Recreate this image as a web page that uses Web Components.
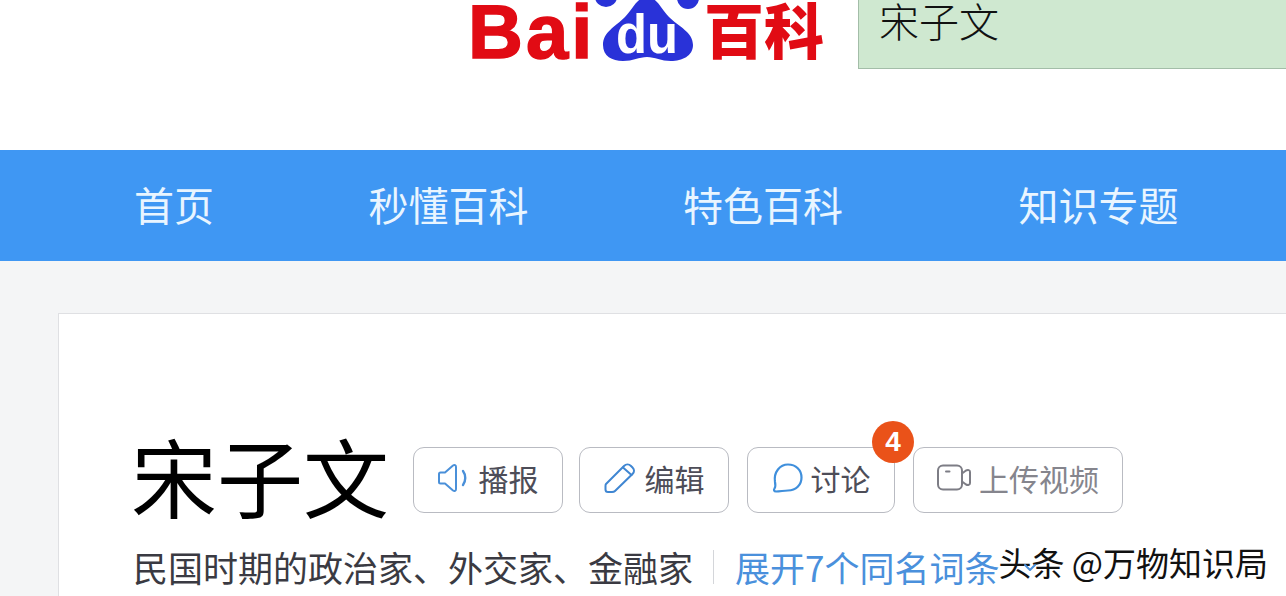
<!DOCTYPE html>
<html lang="zh">
<head>
<meta charset="utf-8">
<title>宋子文 百度百科</title>
<style>
  html, body { margin: 0; height: 596px; overflow: hidden; background: #fff; }
  body { font-family: "Noto Sans CJK SC", "Liberation Sans", sans-serif; position: relative; }
</style>
</head>
<body>
<baike-header>
  <baike-logo></baike-logo>
  <span slot="search">宋子文</span>
</baike-header>
<baike-nav>
  <a>首页</a>
  <a>秒懂百科</a>
  <a>特色百科</a>
  <a style="margin-left: 21px">知识专题</a>
</baike-nav>
<baike-main>
  <lemma-card>
    <span slot="title">宋子文</span>
    <action-button style="width: 150px">
      <svg slot="icon" width="33" height="30" viewBox="0 0 33 30" fill="none" stroke="#4a90d9" stroke-width="2" stroke-linejoin="round" stroke-linecap="round"><path d="M2.500 9.500H7L15 2.500C16.500 1.500 18 2 18 4V26C18 28 16.500 28.500 15 27.500L7 20.500H2.500C1.500 20.500 1 20 1 19V11C1 10 1.500 9.500 2.500 9.500Z"/><path d="M25 8C28 12 28 18 25 22" stroke-width="2.400"/></svg>
      播报
    </action-button>
    <action-button style="width: 150px; gap: 10px">
      <svg slot="icon" width="31" height="30" viewBox="0 0 31 30" fill="none" stroke="#3f86d2" stroke-width="2" stroke-linejoin="round" stroke-linecap="round"><path d="M2 21L20 3C22 1 25 1 27 3L28.500 4.500C30.500 6.500 30.500 9 28.500 11L11 28C10 29 9 29 8 29H4C2.500 29 1.500 28 1.500 26.500V23C1.500 22.200 1.500 21.500 2 21Z"/><path d="M19 4.500L27.500 12"/></svg>
      编辑
    </action-button>
    <action-button style="width: 148px; margin-left: 2px">
      <svg slot="icon" width="31" height="30" viewBox="0 0 31 30" fill="none" stroke="#3f8fdc" stroke-width="2.200" stroke-linejoin="round"><path d="M16 1.500C24 1.500 29.500 7 29.500 14.500C29.500 22 24 27.500 16 27.500C12 27.500 8 28.500 4 28.500C2 28.500 1.500 27 2.500 25.500C3.500 24 3.500 21.500 3 19C1.500 9 8 1.500 16 1.500Z"/></svg>
      讨论
      <span slot="badge">4</span>
    </action-button>
    <action-button muted style="width: 210px; margin-left: 2px">
      <svg slot="icon" width="34" height="27" viewBox="0 0 34 27" fill="none" stroke="#7d7d85" stroke-width="2" stroke-linejoin="round" stroke-linecap="round"><rect x="1" y="1.500" width="24" height="24" rx="5"/><path d="M9 7.500H12.500"/><path d="M25 9.500L29 6.500C31 5.500 33 6 33 8V19C33 21 31 21.500 29 20.500L25 17.500"/></svg>
      上传视频
    </action-button>
    <span slot="desc">民国时期的政治家、外交家、金融家</span>
    <span slot="link">展开7个同名词条</span>
  </lemma-card>
</baike-main>
<toutiao-mark>头条 @万物知识局</toutiao-mark>

<script>
class BaikeHeader extends HTMLElement {
  constructor() {
    super();
    this.attachShadow({ mode: 'open' }).innerHTML = `
      <style>
        :host { display: flex; height: 150px; background: #fff; align-items: flex-start; padding-left: 472px; box-sizing: border-box; }
        .search {
          margin-left: auto; width: 428px; height: 69px; box-sizing: border-box;
          background: #cfe8d0; border: 1px solid #a3bda8; border-width: 0 0 1px 1px;
          padding-left: 20px; font: 300 40px/46px "Liberation Sans", "Noto Sans CJK SC", sans-serif; color: #111;
        }
      </style>
      <slot></slot>
      <div class="search"><slot name="search"></slot></div>`;
  }
}

class BaikeLogo extends HTMLElement {
  constructor() {
    super();
    this.attachShadow({ mode: 'open' }).innerHTML = `
      <style>
        :host { display: flex; height: 62px; width: 352px; color: #e10b14; }
        .bai { font: 700 76px/64px "Liberation Sans", sans-serif; width: 122px; margin-left: -4px; letter-spacing: 3px; -webkit-text-stroke: 1.5px #e10b14; }
        svg { flex: none; margin-left: 5px; overflow: visible; }
        .ke { font: 900 60px/68px "Liberation Sans", "Noto Sans CJK SC", sans-serif; margin-left: 3px; white-space: nowrap; }
      </style>
      <span class="bai">Bai</span>
      <svg width="106" height="62" viewBox="0 0 106 62">
        <ellipse cx="11" cy="-3" rx="11" ry="10" fill="#2932d8"/>
        <ellipse cx="93" cy="-2" rx="11" ry="11" fill="#2932d8"/>
        <path fill="#2932d8" d="M52 -3C42 -3 38 9 30 17C20 27 8 32 8 45C8 56 17 61 28 61C38 61 44 57 52 57C60 57 66 61 76 61C87 61 98 56 98 45C98 32 84 27 74 17C66 9 62 -3 52 -3Z"/>
        <text x="52" y="53" text-anchor="middle" fill="#fff" font-family="Liberation Sans" font-weight="700" font-size="56" textLength="62" lengthAdjust="spacingAndGlyphs">du</text>
      </svg>
      <span class="ke">百科</span>`;
  }
}

class BaikeNav extends HTMLElement {
  constructor() {
    super();
    this.attachShadow({ mode: 'open' }).innerHTML = `
      <style>
        :host {
          display: flex; height: 111px; background: #3f97f3; align-items: center; gap: 154.500px;
          padding: 0 0 4px 134px; box-sizing: border-box;
          color: #e9f5ff; font-size: 40px; white-space: nowrap;
        }
      </style>
      <slot></slot>`;
  }
}

class BaikeMain extends HTMLElement {
  constructor() {
    super();
    this.attachShadow({ mode: 'open' }).innerHTML = `
      <style>
        :host { display: block; height: 335px; box-sizing: border-box; background: #f4f5f6; padding: 52px 0 0 58px; overflow: hidden; }
      </style>
      <slot></slot>`;
  }
}

class LemmaCard extends HTMLElement {
  constructor() {
    super();
    this.attachShadow({ mode: 'open' }).innerHTML = `
      <style>
        :host {
          display: block; height: 300px; margin-right: -10px; box-sizing: border-box;
          background: #fff; border: 1px solid #dfe0e3; padding: 123px 0 0 72px;
        }
        .head { display: flex; align-items: center; height: 86px; gap: 16px; }
        .title { font-size: 86px; line-height: 86px; color: #000; margin: 0 8px 11px 0; white-space: nowrap; }
        .sub { display: flex; align-items: center; margin: 24px 0 0 2px; height: 40px; font-size: 35px; line-height: 40px; white-space: nowrap; color: #3a3a42; }
        .sep { width: 1px; height: 34px; background: #d4d6da; margin: 0 21px 0 20px; }
        .link { color: #4a90dc; }
        /* the reference shows this chevron through the watermark */
        .more { margin-left: 24px; flex: none; position: relative; z-index: 1; }
      </style>
      <div class="head">
        <div class="title"><slot name="title"></slot></div>
        <slot></slot>
      </div>
      <div class="sub">
        <slot name="desc"></slot>
        <span class="sep"></span>
        <span class="link"><slot name="link"></slot></span>
        <svg class="more" width="14" height="9" viewBox="0 0 14 9" fill="none" stroke="#4a90dc" stroke-width="2" stroke-linecap="round" stroke-linejoin="round"><path d="M2 2L7 7L12 2"/></svg>
      </div>`;
  }
}

class ActionButton extends HTMLElement {
  constructor() {
    super();
    this.attachShadow({ mode: 'open' }).innerHTML = `
      <style>
        :host {
          display: flex; position: relative; flex: none; height: 66px; box-sizing: border-box;
          align-items: center; justify-content: center; gap: 8px; padding-bottom: 5px;
          border: 1px solid #b9bbc2; border-radius: 11px; background: #fff;
          font-size: 30px; color: #4d4d58; white-space: nowrap;
        }
        :host([muted]) { color: #85858d; }
        .badge {
          position: absolute; top: -27px; right: -20px; width: 42px; height: 42px; border-radius: 50%;
          background: #ea5219; color: #fff; display: none; align-items: center; justify-content: center;
          font: 700 28px "Liberation Sans", sans-serif;
        }
        .badge.on { display: flex; }
        ::slotted(svg) { flex: none; }
      </style>
      <slot name="icon"></slot>
      <slot></slot>
      <span class="badge"><slot name="badge"></slot></span>`;
  }

  connectedCallback() {
    if (this.querySelector('[slot=badge]')) {
      this.shadowRoot.querySelector('.badge').classList.add('on');
    }
  }
}

class ToutiaoMark extends HTMLElement {
  constructor() {
    super();
    this.attachShadow({ mode: 'open' }).innerHTML = `
      <style>
        :host {
          position: absolute; right: 18px; top: 542px; font-size: 33px; line-height: 40px; color: #111;
          white-space: nowrap;
          text-shadow: 1px 1px 0 #fff, -1px -1px 0 #fff, 1px -1px 0 #fff, -1px 1px 0 #fff;
        }
      </style>
      <slot></slot>`;
  }
}

customElements.define('baike-header', BaikeHeader);
customElements.define('baike-logo', BaikeLogo);
customElements.define('baike-nav', BaikeNav);
customElements.define('baike-main', BaikeMain);
customElements.define('lemma-card', LemmaCard);
customElements.define('action-button', ActionButton);
customElements.define('toutiao-mark', ToutiaoMark);
</script>
</body>
</html>
